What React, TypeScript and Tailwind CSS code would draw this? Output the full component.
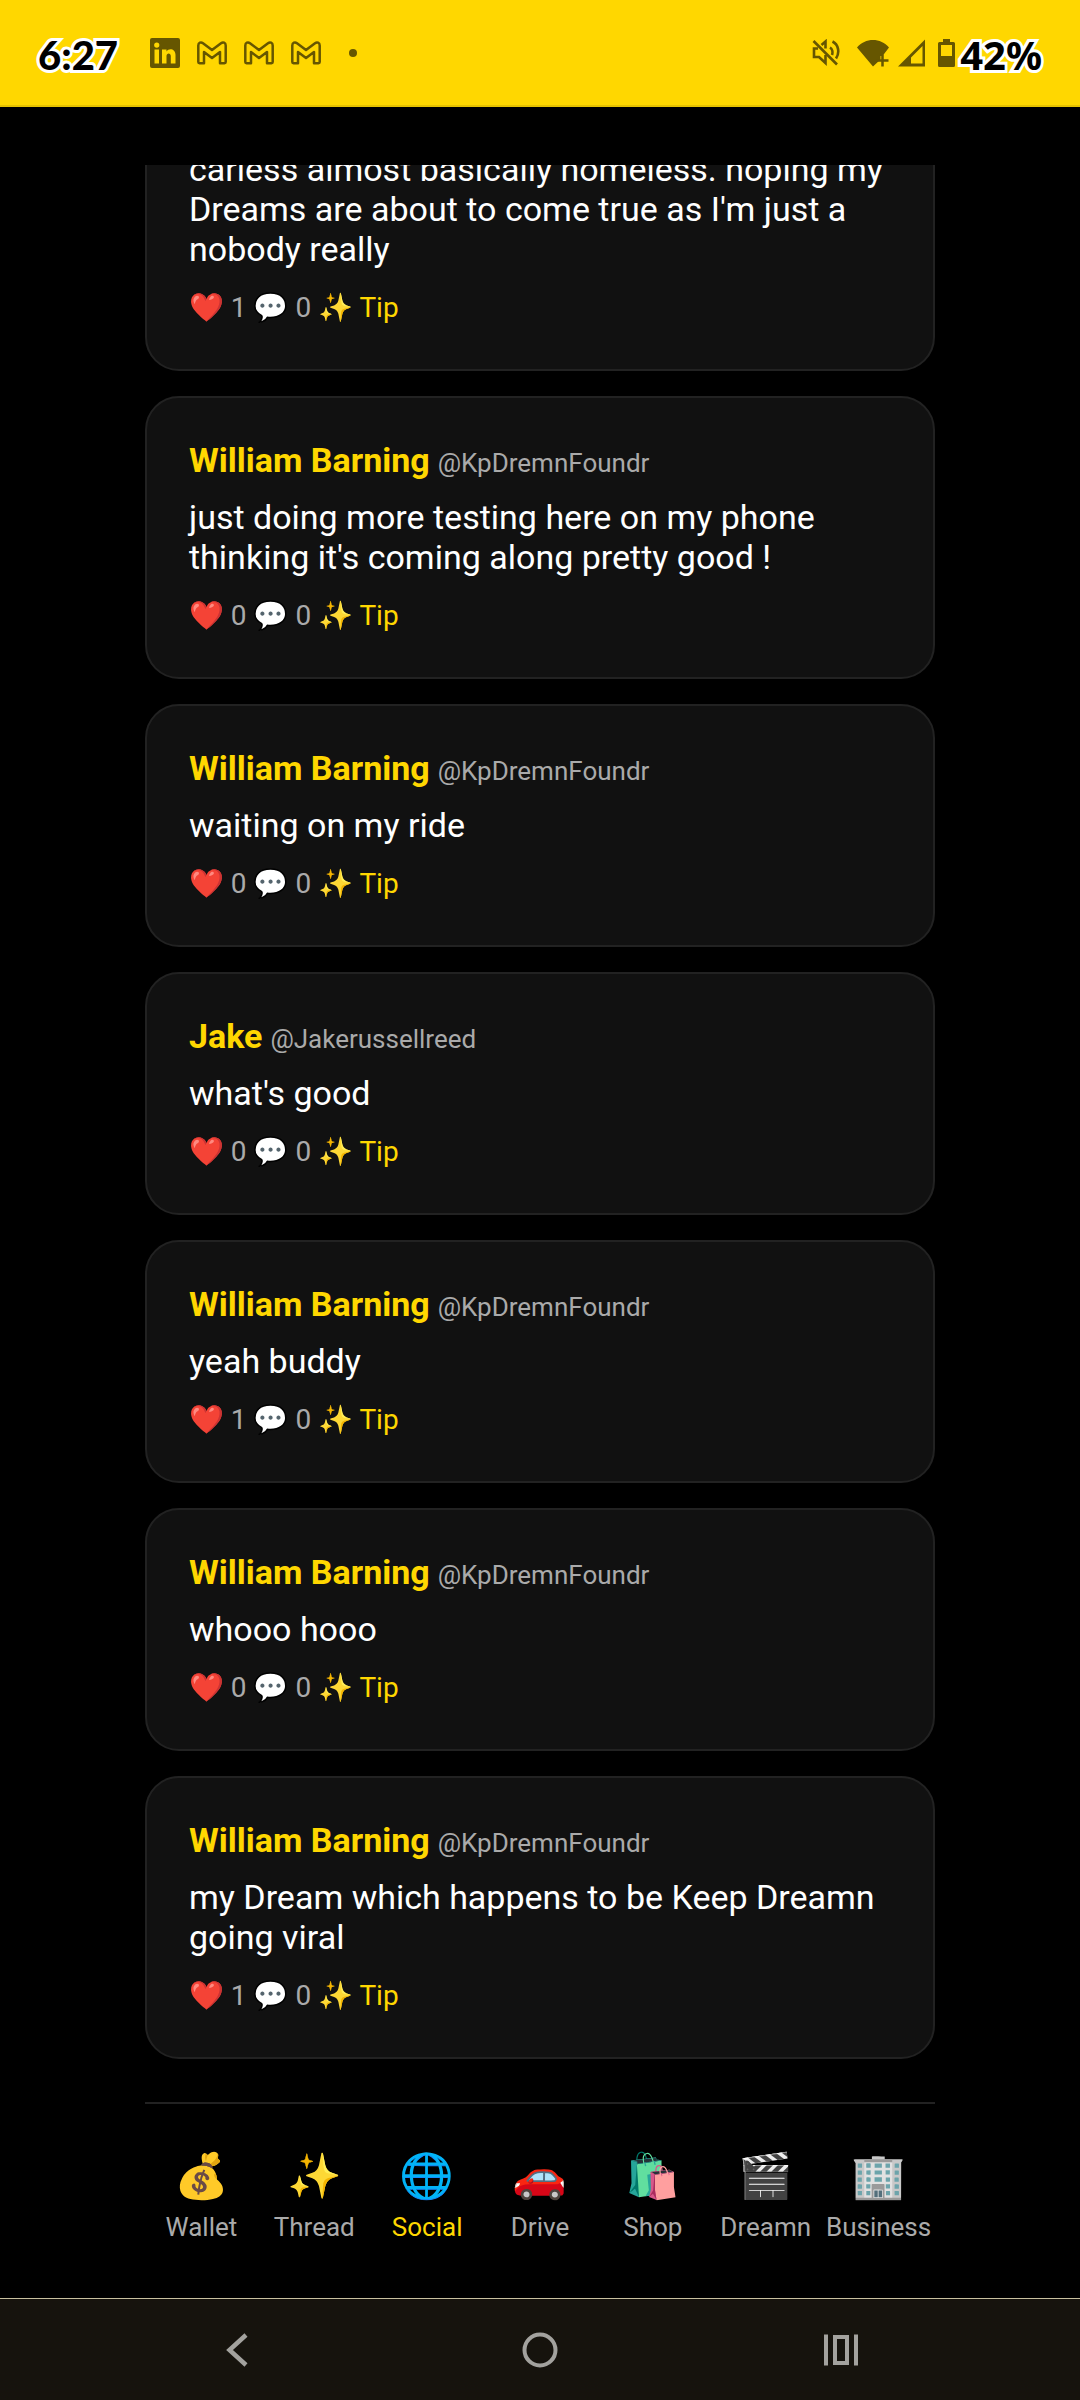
interface Post {
  id: number;
  name: string;
  handle: string;
  text: string;
  likes: number;
  comments: number;
}

const posts: Post[] = [
  {
    id: 1,
    name: 'William Barning',
    handle: '@KpDremnFoundr',
    text: "carless almost basically homeless. hoping my Dreams are about to come true as I'm just a nobody really",
    likes: 1,
    comments: 0,
  },
  {
    id: 2,
    name: 'William Barning',
    handle: '@KpDremnFoundr',
    text: "just doing more testing here on my phone thinking it's coming along pretty good !",
    likes: 0,
    comments: 0,
  },
  { id: 3, name: 'William Barning', handle: '@KpDremnFoundr', text: 'waiting on my ride', likes: 0, comments: 0 },
  { id: 4, name: 'Jake', handle: '@Jakerussellreed', text: "what's good", likes: 0, comments: 0 },
  { id: 5, name: 'William Barning', handle: '@KpDremnFoundr', text: 'yeah buddy', likes: 1, comments: 0 },
  { id: 6, name: 'William Barning', handle: '@KpDremnFoundr', text: 'whooo hooo', likes: 0, comments: 0 },
  {
    id: 7,
    name: 'William Barning',
    handle: '@KpDremnFoundr',
    text: 'my Dream which happens to be Keep Dreamn going viral',
    likes: 1,
    comments: 0,
  },
];

const tabs = [
  { icon: '💰', label: 'Wallet' },
  { icon: '✨', label: 'Thread' },
  { icon: '🌐', label: 'Social' },
  { icon: '🚗', label: 'Drive' },
  { icon: '🛍️', label: 'Shop' },
  { icon: '🎬', label: 'Dreamn' },
  { icon: '🏢', label: 'Business' },
];

function GmailIcon() {
  return (
    <svg width="30" height="24" viewBox="0 0 30 24" fill="none" stroke="currentColor" strokeWidth="2.500" strokeLinejoin="round">
      <path d="M1.300 4.500V21a1.200 1.200 0 0 0 1.200 1.200H7V11l8 6 8-6V22.200h4.500A1.200 1.200 0 0 0 28.700 21V4.500C28.700 1.500 26 .700 24 2.200L15 9 6 2.200C4 .700 1.300 1.500 1.300 4.500Z" />
    </svg>
  );
}

function StatusBar() {
  return (
    <header className="flex h-[107px] shrink-0 items-center justify-between border-b-2 border-[#e6c200] bg-[#ffd700] px-[38px] text-[#665600]">
      <div className="flex items-center">
        <span className="w-28 pt-1 font-['Lato',sans-serif] text-[40px] leading-[48px] font-black text-black [-webkit-text-stroke:6px_white] [paint-order:stroke_fill]">
          6:27
        </span>
        <div className="flex items-center gap-[17px]">
          <svg width="30" height="30" viewBox="0 0 30 30">
            <path
              fill="currentColor"
              fillRule="evenodd"
              d="M2 0h26a2 2 0 0 1 2 2v26a2 2 0 0 1-2 2H2a2 2 0 0 1-2-2V2a2 2 0 0 1 2-2ZM4.500 11.500V25.500H9V11.500ZM6.750 4.500a2.600 2.600 0 1 0 0 5.200 2.600 2.600 0 0 0 0-5.200ZM12 11.500V25.500h4.500V18c0-3.500 4.300-3.500 4.300 0v7.500h4.700V17c0-6.500-6.700-7.300-9-3.600V11.500Z"
            />
          </svg>
          <GmailIcon />
          <GmailIcon />
          <GmailIcon />
        </div>
        <span className="ml-7 size-2 rounded-full bg-[#665600]" />
      </div>
      <div className="flex items-center">
        <svg width="28" height="28" viewBox="0 0 28 28" fill="none" stroke="currentColor" strokeWidth="2.600">
          <path d="M1.500 2 25 25.500" />
          <path d="M6 9.500H2v8.500h5l6.500 6V16M9.500 6 13.500 2.500V9.500" />
          <path d="M18 8.500c2.200 1.300 3 4.500 2 7.500M20.500 2.500c6 3 7.500 11 3.500 17" />
        </svg>
        <svg className="ml-4" width="34" height="28" viewBox="0 0 34 28">
          <path fill="currentColor" d="M1 8.500C9-1.500 25-1.500 33 8.500L26.500 17h-2v3.500L17 27.500Z" />
          <path d="M26.500 15.500v12M20.500 21.500h12" stroke="currentColor" strokeWidth="2.500" />
        </svg>
        <svg className="ml-2" width="28" height="28" viewBox="0 0 28 28">
          <path fill="currentColor" fillRule="evenodd" d="M27 .500v27H0ZM24.500 7 13 18.500V24.500H24.500Z" />
        </svg>
        <svg className="ml-3 mr-[5px]" width="17" height="28" viewBox="0 0 17 28">
          <path fill="currentColor" fillRule="evenodd" d="M5 0h7v3h3.500A1.500 1.500 0 0 1 17 4.500v22a1.500 1.500 0 0 1-1.500 1.500h-14A1.500 1.500 0 0 1 0 26.500v-22A1.500 1.500 0 0 1 1.500 3H5ZM3 6v11h11V6Z" />
        </svg>
        <span className="pt-1 font-['Noto_Sans',sans-serif] text-[40px] leading-[48px] font-bold text-black [-webkit-text-stroke:6px_white] [paint-order:stroke_fill]">
          42%
        </span>
      </div>
    </header>
  );
}

function PostCard({ post }: { post: Post }) {
  return (
    <article className="rounded-[34px] border-2 border-[#222] bg-[#111] p-[42px]">
      <div className="flex items-baseline gap-2">
        <span className="text-[34px] leading-10 font-bold text-[#ffd700]">{post.name}</span>
        <span className="text-[26px] leading-8 text-[#aaa]">{post.handle}</span>
      </div>
      <p className="mt-[17px] text-[34px] leading-10 text-white">{post.text}</p>
      <div className="mt-5 flex h-[38px] items-center gap-[7px] text-[28px] leading-8 text-[#aaa]">
        <button type="button">❤️ {post.likes}</button>
        <button type="button">💬 {post.comments}</button>
        <button type="button" className="text-[#ffd700]">✨ Tip</button>
      </div>
    </article>
  );
}

function TabBar({ active }: { active: string }) {
  return (
    <nav className="mt-[43px] flex h-[196px] shrink-0 border-t-2 border-[#222] pt-[42px]">
      {tabs.map((tab) => (
        <button
          key={tab.label}
          type="button"
          className={`flex flex-1 basis-0 flex-col items-center gap-[5px] ${tab.label === active ? 'text-[#ffd700]' : 'text-[#aaa]'}`}
        >
          <span className="text-[44px] leading-[60px]">{tab.icon}</span>
          <span className="text-[26px] leading-8">{tab.label}</span>
        </button>
      ))}
    </nav>
  );
}

function SystemBar() {
  return (
    <footer className="flex h-[102px] shrink-0 items-center justify-around border-t border-[#c8c0a0] bg-[#16130d] px-[88px] text-[#a3a29e]">
      <button type="button" aria-label="Back">
        <svg width="36" height="36" viewBox="0 0 36 36" fill="none" stroke="currentColor" strokeWidth="4.500">
          <path d="M25 3 8.500 18 25 33" />
        </svg>
      </button>
      <button type="button" aria-label="Home">
        <svg width="36" height="36" viewBox="0 0 36 36" fill="none" stroke="currentColor" strokeWidth="4">
          <circle cx="18" cy="18" r="15.500" />
        </svg>
      </button>
      <button type="button" aria-label="Recents">
        <svg width="36" height="36" viewBox="0 0 36 36" fill="none" stroke="currentColor" strokeWidth="4">
          <path d="M3 2.500v31M33 2.500v31M12 5h12v26H12Z" />
        </svg>
      </button>
    </footer>
  );
}

export default function App() {
  return (
    <div className="flex h-screen flex-col bg-black font-['Roboto','Noto_Color_Emoji',sans-serif]">
      <StatusBar />
      <div className="mx-auto flex min-h-0 w-full max-w-[790px] flex-1 flex-col pt-[58px]">
        <main className="flex min-h-0 flex-1 flex-col justify-end gap-[25px] overflow-hidden">
          {posts.map((post) => (
            <PostCard key={post.id} post={post} />
          ))}
        </main>
        <TabBar active="Social" />
      </div>
      <SystemBar />
    </div>
  );
}
